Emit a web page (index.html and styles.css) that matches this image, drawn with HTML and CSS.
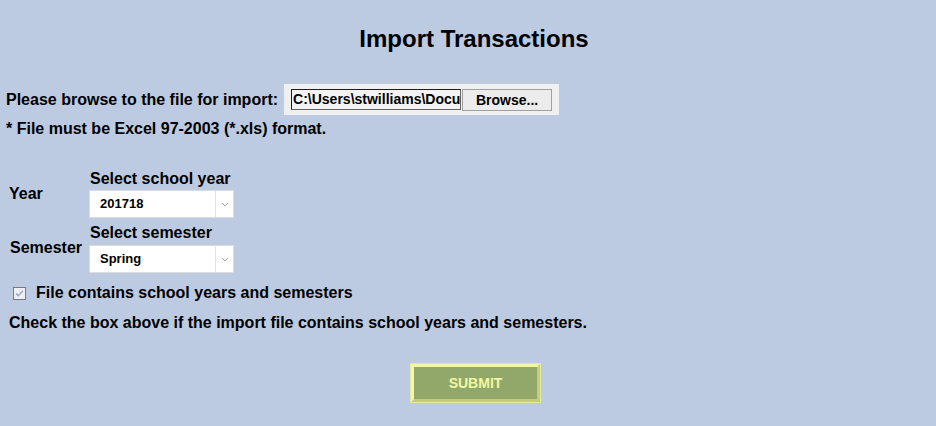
FILE: index.html
```html
<!DOCTYPE html>
<html>
<head>
<meta charset="utf-8">
<link rel="stylesheet" href="styles.css">
</head>
<body>
<div class="page">
  <h1 class="title">Import Transactions</h1>

  <div class="file-row">
    <span class="label">Please browse to the file for import:</span>
    <div class="file-box">
      <div class="file-input">C:\Users\stwilliams\Docu</div>
      <div class="browse-btn">Browse...</div>
    </div>
  </div>
  <div class="note">* File must be Excel 97-2003 (*.xls) format.</div>

  <div class="fields">
    <div class="field-row first">
      <div class="field-label">Year</div>
      <div class="field">
        <div class="caption">Select school year</div>
        <div class="select">
          <span class="select-value">201718</span>
          <span class="select-arrow"><svg width="8" height="5" viewBox="0 0 8 5"><path d="M1 1 L4 4 L7 1" fill="none" stroke="#b0b0b0" stroke-width="1"/></svg></span>
        </div>
      </div>
    </div>
    <div class="field-row second">
      <div class="field-label">Semester</div>
      <div class="field">
        <div class="caption">Select semester</div>
        <div class="select">
          <span class="select-value">Spring</span>
          <span class="select-arrow"><svg width="8" height="5" viewBox="0 0 8 5"><path d="M1 1 L4 4 L7 1" fill="none" stroke="#b0b0b0" stroke-width="1"/></svg></span>
        </div>
      </div>
    </div>
  </div>

  <div class="check-row">
    <svg class="checkbox" width="13" height="13" viewBox="0 0 13 13"><rect x="0.5" y="0.5" width="12" height="12" fill="#eef0f6" stroke="#7a7a7a"/><path d="M3 6.5 L5.2 8.8 L10 3.8" fill="none" stroke="#9aa3bd" stroke-width="1.3"/></svg>
    <span class="label">File contains school years and semesters</span>
  </div>
  <div class="note check-note">Check the box above if the import file contains school years and semesters.</div>

  <div class="submit-wrap">
    <div class="submit">SUBMIT</div>
  </div>
</div>
</body>
</html>
```

FILE: styles.css
```css
html, body {
  margin: 0;
  padding: 0;
}
body {
  background: #bccae2;
  font-family: "Liberation Sans", Arial, sans-serif;
  color: #000;
  width: 936px;
  height: 426px;
  overflow: hidden;
}
.page {
  padding: 0 6px;
  display: flex;
  flex-direction: column;
}
.title {
  margin: 25px 0 0 0;
  padding-left: 12px;
  font-size: 24px;
  line-height: 28px;
  font-weight: bold;
  text-align: center;
}
.label {
  font-size: 16px;
  font-weight: bold;
  line-height: 20px;
}
.file-row {
  margin-top: 31px;
  display: flex;
  align-items: center;
  height: 31px;
}
.file-box {
  margin-left: 6px;
  background: #f0f0f0;
  height: 31px;
  width: 275px;
  box-sizing: border-box;
  padding: 5px 0 0 7px;
  display: flex;
  align-items: flex-start;
}
.file-input {
  width: 170px;
  height: 21px;
  box-sizing: border-box;
  border: 1px solid #646464;
  border-top-color: #1e1e1e;
  border-left-color: #1e1e1e;
  background: #f3f3f3;
  font-size: 14px;
  font-weight: bold;
  line-height: 19px;
  padding-left: 1px;
  white-space: nowrap;
  overflow: hidden;
}
.browse-btn {
  margin-left: 1px;
  width: 90px;
  height: 22px;
  box-sizing: border-box;
  border: 1px solid #a0a0a0;
  background: #ececec;
  font-size: 14px;
  font-weight: bold;
  line-height: 20px;
  text-align: center;
}
.note {
  margin-top: 4px;
  font-size: 16px;
  font-weight: bold;
  line-height: 20px;
}
.fields {
  margin-top: 30px;
  display: flex;
  flex-direction: column;
}
.field-row {
  display: flex;
  align-items: center;
}
.field-row.second {
  margin-top: 5px;
}
.field-label {
  width: 80px;
  padding-left: 3px;
  box-sizing: border-box;
  font-size: 16px;
  font-weight: bold;
  line-height: 20px;
}
.field-row.second .field-label {
  padding-left: 4px;
}
.field {
  display: flex;
  flex-direction: column;
  padding-left: 3px;
}
.caption {
  font-size: 16px;
  font-weight: bold;
  line-height: 20px;
  padding-left: 1px;
}
.select {
  margin-top: 1px;
  width: 145px;
  height: 28px;
  box-sizing: border-box;
  border: 1px solid #dcdcdc;
  background: #fff;
  display: flex;
  align-items: stretch;
}
.field-row.second .select {
  margin-top: 2px;
}
.select-value {
  flex: 1;
  padding-left: 10px;
  font-size: 13px;
  font-weight: bold;
  line-height: 26px;
}
.select-arrow {
  width: 17px;
  border-left: 1px solid #e3e3e3;
  display: flex;
  align-items: center;
  justify-content: center;
}
.check-row {
  margin-top: 10px;
  display: flex;
  align-items: center;
  height: 20px;
}
.checkbox {
  margin-left: 7px;
  margin-right: 10px;
  flex: none;
}
.check-note {
  margin-top: 10px;
  padding-left: 3px;
}
.submit-wrap {
  margin-top: 30px;
  display: flex;
  padding-left: 405px;
}
.submit {
  width: 129px;
  height: 38px;
  box-sizing: border-box;
  border: 3px solid;
  border-color: #f3f7a6 #c6cc7c #c6cc7c #f3f7a6;
  box-shadow: 0 0 0 1px #e2ea9e;
  background: #92a86a;
  color: #f2f6a2;
  font-size: 14px;
  font-weight: bold;
  line-height: 32px;
  text-align: center;
  margin-top: 1px;
}
```
